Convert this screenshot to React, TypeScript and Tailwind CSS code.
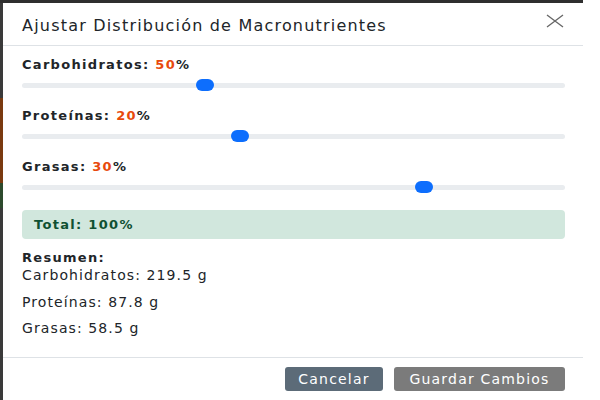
import React from 'react'

const sliders = [
  { label: 'Carbohidratos', value: 50, thumb: 183 },
  { label: 'Proteínas', value: 20, thumb: 218 },
  { label: 'Grasas', value: 30, thumb: 402 },
]

const summary = [
  'Carbohidratos: 219.5 g',
  'Proteínas: 87.8 g',
  'Grasas: 58.5 g',
]

function Slider({ thumb }: { thumb: number }) {
  return (
    <div className="relative h-[14px] flex items-center">
      <div className="h-[5px] w-full rounded-full bg-[#e9ecef]" />
      {/* thumb */}
      <div
        className="absolute top-[1px] h-[12px] w-[18px] rounded-full bg-[#0d6efd]"
        style={{ left: thumb - 9 }}
      />
    </div>
  )
}

export default function App() {
  return (
    <div
      className="flex w-[600px] h-[400px] bg-white overflow-hidden"
      style={{ fontFamily: '"DejaVu Sans", "Noto Sans", sans-serif' }}
    >
      <div className="flex w-[583px] h-full bg-[#2f2f2f] pt-[3px]">
        <div className="flex flex-col w-[3px] h-full">
          <div className="h-[95px] bg-[#3a3a3a]" />
          <div className="h-[85px] bg-[#7a3a10]" />
          <div className="h-[25px] bg-[#2d4a2d]" />
          <div className="flex-1 bg-[#3a3a3a]" />
        </div>
        <div className="flex flex-col flex-1 bg-white text-[#212529]">
          {/* header */}
          <div className="flex items-center justify-between h-[43px] pl-[19px] pr-[18px] border-b border-[#dee2e6]">
            <h2 className="text-[16px] leading-none mt-[4px] tracking-[1.2px] text-[#212529]">
              Ajustar Distribución de Macronutrientes
            </h2>
            <svg width="20" height="20" viewBox="0 0 20 20" className="mb-[7px]">
              <path d="M2 4 L18 16 M18 4 L2 16" stroke="#666" strokeWidth="1.3" fill="none" />
            </svg>
          </div>

          {/* body */}
          <div className="flex flex-col pl-[19px] pr-[18px] pt-[11px]">
            {sliders.map((s) => (
              <div key={s.label} className="flex flex-col mb-[16px]">
                <div className="text-[13px] font-bold leading-[16px] mb-[5px] tracking-[1.3px]">
                  {s.label}: <span className="text-[#e8490c]">{s.value}</span>%
                </div>
                <Slider thumb={s.thumb} />
              </div>
            ))}

            <div className="flex items-center h-[29px] px-[12px] rounded-[4px] bg-[#d1e7dd] text-[#0f5132] text-[13px] font-bold tracking-[1.3px]">
              Total: 100%
            </div>

            <div className="text-[13px] font-bold mt-[11px] leading-[16px] tracking-[1.3px]">Resumen:</div>
            <div className="flex flex-col text-[14px] leading-[18px] gap-[8.5px] tracking-[1.1px]">
              {summary.map((t) => (
                <p key={t}>{t}</p>
              ))}
            </div>
          </div>

          {/* footer */}
          <div className="mt-auto flex justify-end gap-[11px] items-center h-[43px] pr-[18px] border-t border-[#dee2e6]">
            <button className="h-[24px] w-[98px] rounded-[3px] bg-[#5c6b78] text-white text-[14px] tracking-[1.2px]">
              Cancelar
            </button>
            <button className="h-[24px] w-[171px] rounded-[3px] bg-[#7b7b7b] text-white text-[14px] tracking-[1.2px]">
              Guardar Cambios
            </button>
          </div>
        </div>
      </div>
    </div>
  )
}
